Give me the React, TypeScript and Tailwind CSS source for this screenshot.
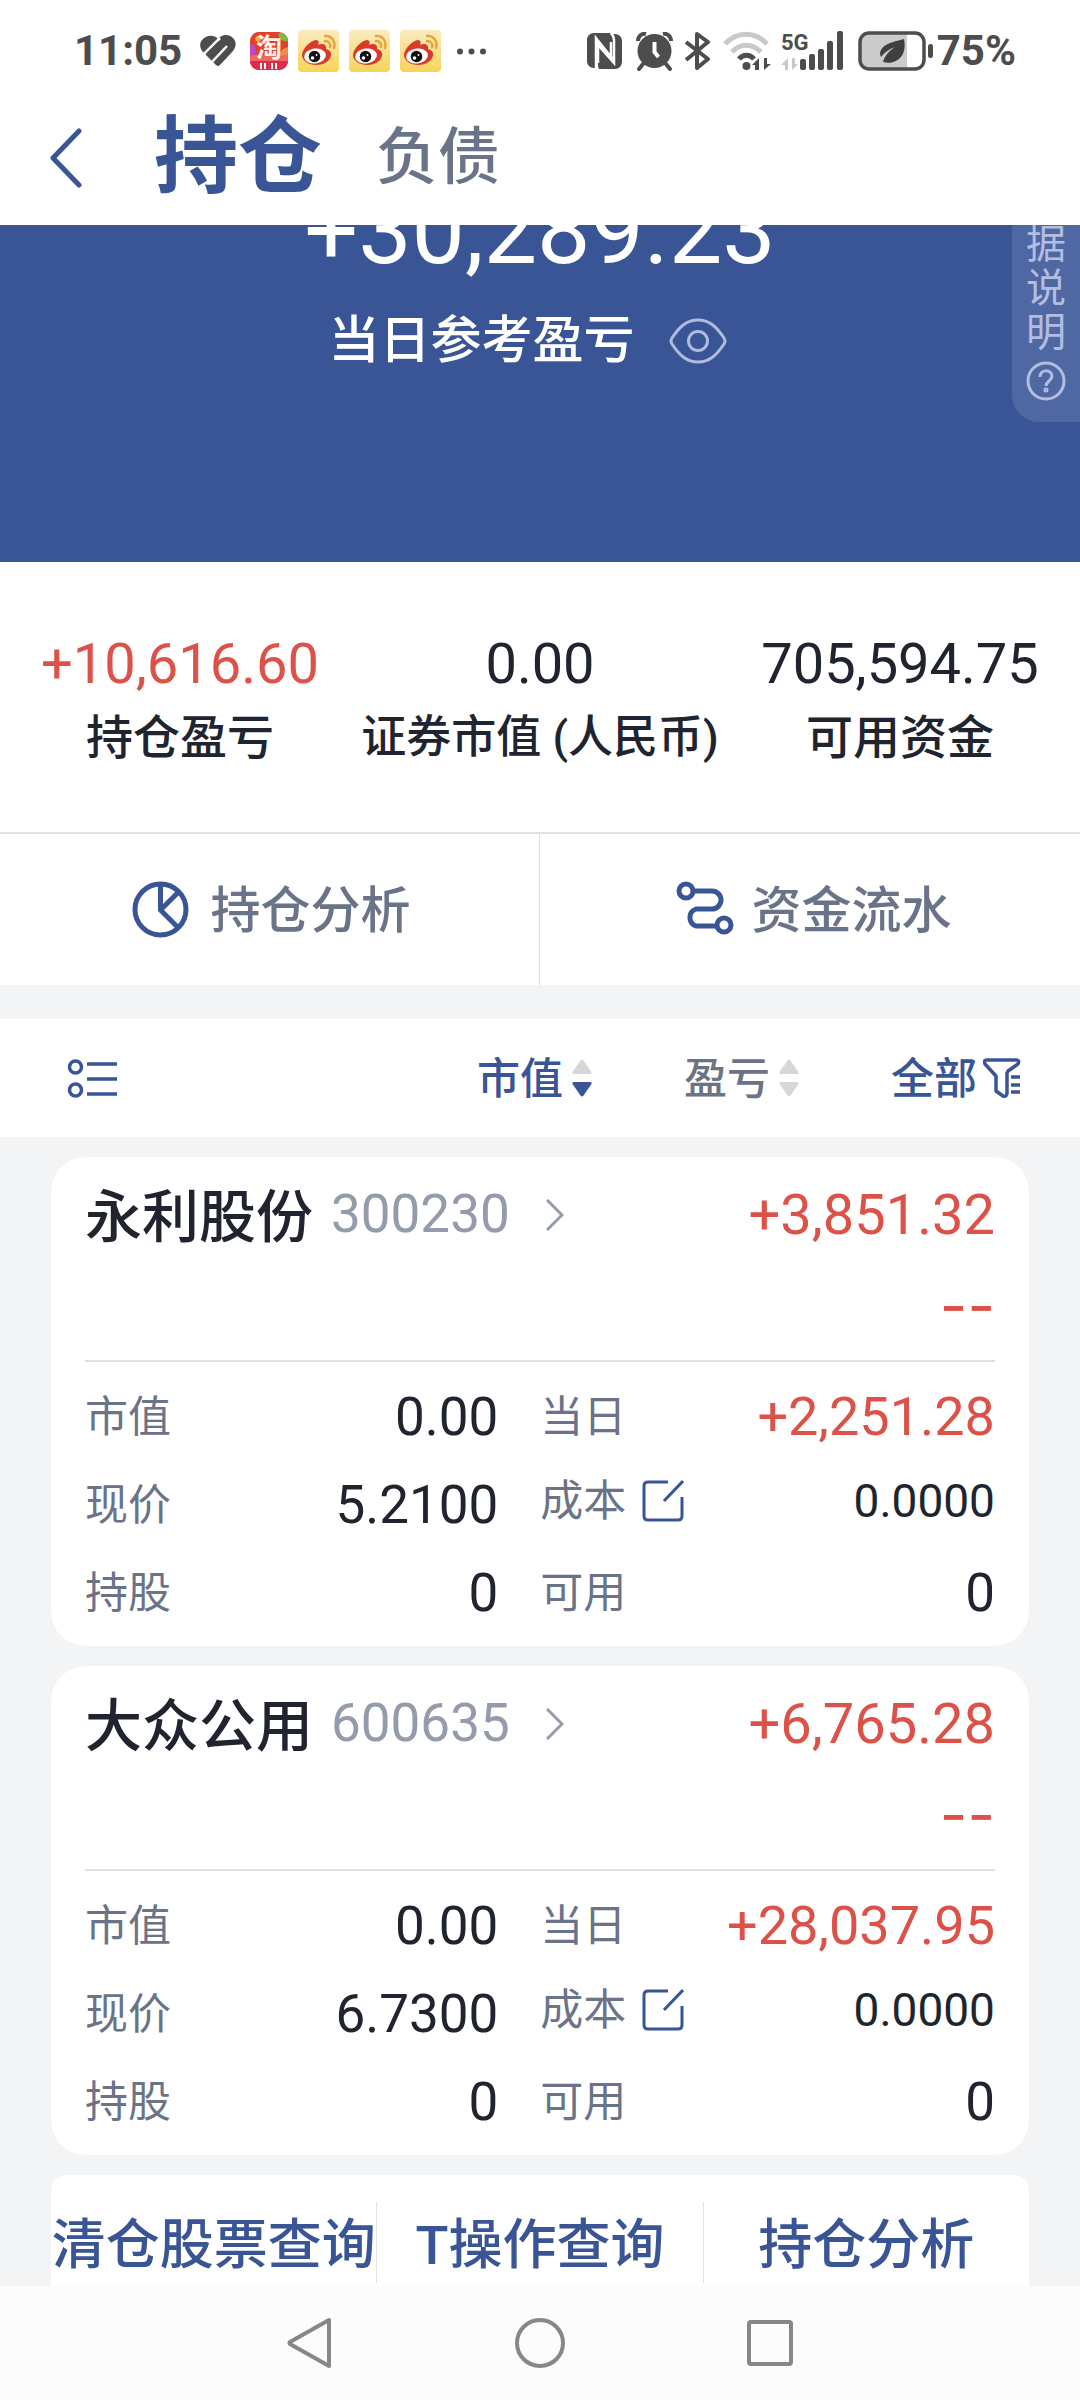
import { Fragment, ReactNode } from "react";

type Holding = {
  name: string;
  code: string;
  profit: string;
  marketValue: string;
  today: string;
  price: string;
  cost: string;
  shares: string;
  available: string;
};

const summary = [
  { label: "持仓盈亏", value: "+10,616.60", color: "text-[#dc5248]", size: "text-[47px]" },
  { label: "证券市值 (人民币)", value: "0.00", color: "text-[#20242f]", size: "text-[45px]" },
  { label: "可用资金", value: "705,594.75", color: "text-[#20242f]", size: "text-[47px]" },
];

const holdings: Holding[] = [
  {
    name: "永利股份",
    code: "300230",
    profit: "+3,851.32",
    marketValue: "0.00",
    today: "+2,251.28",
    price: "5.2100",
    cost: "0.0000",
    shares: "0",
    available: "0",
  },
  {
    name: "大众公用",
    code: "600635",
    profit: "+6,765.28",
    marketValue: "0.00",
    today: "+28,037.95",
    price: "6.7300",
    cost: "0.0000",
    shares: "0",
    available: "0",
  },
];

const queries = ["清仓股票查询", "T操作查询", "持仓分析"];

function HeartIcon() {
  return (
    <svg width="36" height="32" viewBox="0 0 36 32" fill="none">
      <path d="M18 4C14-1 6 0 2 5-1 9 0 14 3 17l13 13q2 2 4 0L33 16c3-4 4-9 0-13-4-4-11-4-15 1Z" fill="#4d4d4d" />
      <path d="M3 20 20 3M11 28l16-17" stroke="#fff" strokeWidth="2.500" />
      <path d="m3 19 9 9-5 4-7-8Z" fill="#fff" />
      <path d="M7 19 19 7" stroke="#4d4d4d" strokeWidth="2" />
    </svg>
  );
}

function TaobaoIcon() {
  return (
    <svg width="38" height="38" viewBox="0 0 38 38">
      <defs>
        <clipPath id="tb">
          <rect width="38" height="38" rx="9" />
        </clipPath>
      </defs>
      <g clipPath="url(#tb)">
        <rect width="38" height="38" fill="#e2402f" />
        <path d="M0 13c4-2 7 4 5 9l-5 3Z" fill="#b84bd0" />
        <path d="M38 15c-7 1-9 8-14 13h14Z" fill="#f08a45" />
        <path d="M0 24c10-4 22 4 38-2v8H0Z" fill="#ea6a63" />
        <rect y="29" width="38" height="9" fill="#e02b4b" />
        <circle cx="8" cy="7" r="3" fill="#f4a93c" />
        <path d="M28 2c3-2 8-1 10 2v5c-5 1-9-2-10-7Z" fill="#7fb83d" />
      </g>
      <text x="19" y="25" textAnchor="middle" fontSize="26" fontWeight="700" fill="#fff4e6" fontFamily="'Noto Sans CJK SC', sans-serif">
        淘
      </text>
      <path d="M11 31v6M15 31v6M22 31v6M26 31v6" stroke="#fff" strokeWidth="2" />
    </svg>
  );
}

function WeiboIcon({ id }: { id: string }) {
  return (
    <svg width="41" height="42" viewBox="0 0 41 42" fill="none">
      <defs>
        <linearGradient id={id} x1="0" y1="0" x2="0" y2="1">
          <stop offset="0" stopColor="#fbecc0" />
          <stop offset="1" stopColor="#f7d458" />
        </linearGradient>
      </defs>
      <rect width="41" height="42" rx="4" fill={`url(#${id})`} />
      <path
        d="M4 25C4 19 13 10 18 10c3 0 3 3 2 5 4-2 9-1 8 4 4 1 6 4 5 7-2 6-8 9-15 9S4 31 4 25Z"
        fill="#d93a2b"
      />
      <ellipse cx="17" cy="26" rx="11" ry="7.500" transform="rotate(-8 17 26)" fill="#fff" />
      <circle cx="16.500" cy="26.500" r="5.800" fill="#111" />
      <circle cx="14.500" cy="28" r="1.800" fill="#fff" />
      <circle cx="18.500" cy="25" r="0.900" fill="#fff" />
      <path d="M27 6c6-1 11 5 9 12M27 11c4 0 6 3 5 6" stroke="#e9a23b" strokeWidth="2.400" strokeLinecap="round" />
    </svg>
  );
}

function NfcIcon() {
  return (
    <svg width="35" height="36" viewBox="0 0 35 36">
      <path d="M7 0h16l3 4v20L10 7v28H7c-4 0-7-3-7-7V7c0-4 3-7 7-7Z" fill="#4d4d4d" />
      <path d="M26 1h2c4 0 7 3 7 7v20c0 5-3 8-7 8H12l-1-3V12l16 16V7Z" fill="#4d4d4d" />
      <path d="M9 36V5l15 19V9" fill="none" stroke="#fff" strokeWidth="2.500" />
      <path d="M24 0c2 2 3 4 3 7v23L11 12v18" fill="none" stroke="#fff" strokeWidth="2.500" />
    </svg>
  );
}

function AlarmIcon() {
  return (
    <svg width="37" height="39" viewBox="0 0 37 39" fill="none">
      <circle cx="18.500" cy="19" r="17" fill="#4d4d4d" />
      <path d="M2 9C2 4 6 1 10 2M35 9c0-5-4-8-8-7" stroke="#4d4d4d" strokeWidth="4" />
      <path d="m7 32-4 5M30 32l4 5" stroke="#4d4d4d" strokeWidth="4" strokeLinecap="round" />
      <path d="M18.500 10v10l4 5" stroke="#fff" strokeWidth="4" />
    </svg>
  );
}

function BluetoothIcon() {
  return (
    <svg width="26" height="40" viewBox="0 0 26 40" fill="none" stroke="#4d4d4d" strokeWidth="4" strokeLinejoin="round">
      <path d="m1 11 22 17-11 9V3l11 8L1 29" />
    </svg>
  );
}

function WifiIcon() {
  return (
    <svg width="48" height="40" viewBox="0 0 48 40" fill="none">
      <path d="M2 13C14 0 32 0 44 13" stroke="#c9c9c9" strokeWidth="5" />
      <path d="M9 21c8-9 20-9 29 0" stroke="#c9c9c9" strokeWidth="5" />
      <path d="M16 28c4-5 11-5 15 0" stroke="#4d4d4d" strokeWidth="5" />
      <circle cx="23.500" cy="35" r="4" fill="#4d4d4d" />
      <path d="M29 34l7-7v12h-4v-5ZM48 33l-7 6V27h3v6Z" fill="#4d4d4d" />
    </svg>
  );
}

function SignalIcon() {
  return (
    <svg width="63" height="40" viewBox="0 0 63 40">
      <text x="0" y="19" fontSize="22" fontWeight="700" fill="#4d4d4d" fontFamily="Roboto, sans-serif">
        5G
      </text>
      <path d="M0 34l7-7v12H4v-5ZM17 33l-6 6V27h3v6Z" fill="#c9c9c9" />
      <g fill="#4d4d4d">
        <rect x="19" y="28" width="6" height="11" rx="2" />
        <rect x="28" y="23" width="6" height="16" rx="2" />
        <rect x="37" y="18" width="6" height="21" rx="2" />
        <rect x="46" y="10" width="6" height="29" rx="2" />
        <rect x="56" y="0" width="6" height="39" rx="2" />
      </g>
    </svg>
  );
}

function BatteryIcon() {
  return (
    <svg width="76" height="40" viewBox="0 0 76 40">
      <path d="M10 3h39v34H10c-5 0-8-3-8-8V11c0-5 3-8 8-8Z" fill="#cbcbcb" />
      <rect x="2" y="2" width="64" height="36" rx="9" fill="none" stroke="#4d4d4d" strokeWidth="3.500" />
      <rect x="70" y="13" width="5" height="14" rx="2.500" fill="#4d4d4d" />
      <path d="M46 8c-9 3-23 4-24 15l1 3c4-5 8-8 14-10-6 4-10 8-12 15 10 3 25-3 21-23Z" fill="#3f3f3f" />
    </svg>
  );
}

function SortArrows({ active }: { active?: boolean }) {
  return (
    <svg width="20" height="40" viewBox="0 0 20 40">
      <path d="M8.500 2.500q1.500-2 3 0L19.500 14q.5 2-1 2h-17q-1.500 0-1-2Z" fill="#d5d7db" />
      <path
        d="M8.500 37.500q1.500 2 3 0L19.500 26q.5-2-1-2h-17q-1.500 0-1 2Z"
        fill={active ? "#395596" : "#d5d7db"}
      />
    </svg>
  );
}

function StatusBar() {
  return (
    <div className="flex justify-between items-center h-[102px] pl-[74px] pr-[64px] text-[42px] font-bold text-[#4d4d4d] leading-none">
      <div className="flex items-center">
        <span className="mr-[18px]">11:05</span>
        <HeartIcon />
        <div className="flex items-center gap-[10px] ml-[14px] mr-4">
          <TaobaoIcon />
          <WeiboIcon id="wb1" />
          <WeiboIcon id="wb2" />
          <WeiboIcon id="wb3" />
        </div>
        <svg width="29" height="7" viewBox="0 0 29 7" fill="#4d4d4d">
          <circle cx="3" cy="3.500" r="3" />
          <circle cx="14.500" cy="3.500" r="3" />
          <circle cx="26" cy="3.500" r="3" />
        </svg>
      </div>
      <div className="flex items-center">
        <NfcIcon />
        <div className="flex items-center gap-3 ml-[14px]">
          <AlarmIcon />
          <BluetoothIcon />
          <WifiIcon />
        </div>
        <div className="flex items-center gap-[14px] ml-[10px] mr-[3px]">
          <SignalIcon />
          <BatteryIcon />
        </div>
        <span>75%</span>
      </div>
    </div>
  );
}

function Header() {
  return (
    <header className="flex items-center h-[123px] pb-3 pl-[50px]">
      <button aria-label="返回">
        <svg width="32" height="60" viewBox="0 0 32 60" fill="none" stroke="#395596" strokeWidth="5" strokeLinecap="round" strokeLinejoin="round">
          <path d="M29 3 3 30l26 27" />
        </svg>
      </button>
      <nav className="flex items-center gap-[54px] ml-[72px] leading-none">
        <a href="#" className="text-[84px] font-bold text-[#395596]">持仓</a>
        <a href="#" className="text-[62px] text-[#6b7388] font-medium">负债</a>
      </nav>
    </header>
  );
}

function Banner() {
  return (
    <section className="relative h-[337px] overflow-hidden bg-[#395596] text-white">
      <p className="-mt-[42px] text-[95px] leading-none text-center">+30,289.23</p>
      <div className="flex justify-center items-center gap-[34px] mt-[33px] pr-[25px]">
        <span className="text-[51px] leading-[60px] font-medium">当日参考盈亏</span>
        <button aria-label="隐藏金额">
          <svg width="58" height="46" viewBox="0 0 58 46" fill="none" stroke="#b0bcdf" strokeWidth="3">
            <path d="M3 20C11 8 18 2 29 2s18 6 26 18q2 3 0 6C47 38 40 44 29 44S11 38 3 26q-2-3 0-6Z" />
            <circle cx="29" cy="23" r="9.500" />
          </svg>
        </button>
      </div>
      <button className="absolute right-0 bottom-[140px] w-[68px] flex flex-col items-center pb-[21px] rounded-bl-[27px] bg-[#4f68a3] text-[#b3bde0] text-[40px] leading-[44px]">
        <span>数</span>
        <span>据</span>
        <span>说</span>
        <span>明</span>
        <svg className="mt-[6px]" width="40" height="40" viewBox="0 0 40 40" fill="none" stroke="#b3bde0" strokeWidth="3">
          <circle cx="20" cy="20" r="18" />
          <path d="M14 16c0-8 12-8 12-1 0 5-6 5-6 10" />
          <circle cx="20" cy="29" r="1" />
        </svg>
      </button>
    </section>
  );
}

function Summary() {
  return (
    <section className="grid grid-cols-3 h-[270px] pt-[70px] bg-white text-center">
      {summary.map((item) => (
        <div key={item.label}>
          <p className={`text-[56px] leading-[64px] ${item.color}`}>{item.value}</p>
          <p className={`${item.size} mt-[10px] leading-[64px] font-medium whitespace-nowrap text-[#20242f]`}>{item.label}</p>
        </div>
      ))}
    </section>
  );
}

function Shortcuts() {
  return (
    <section className="grid grid-cols-2 h-[153px] border-t-2 border-[#dfe0e2] bg-white text-[50px] text-[#6b7388] font-medium">
      <button className="flex justify-center items-center gap-[22px] pl-[3px] border-r border-[#dfe0e2]">
        <svg width="57" height="57" viewBox="0 0 57 57" fill="none" stroke="#395596" strokeWidth="5">
          <circle cx="28.500" cy="28.500" r="25.500" />
          <path d="M28.500 3v26l17 17M28.500 29l18-18" />
        </svg>
        <span className="pt-1">持仓分析</span>
      </button>
      <button className="flex justify-center items-center gap-[18px] pl-[7px]">
        <svg width="58" height="58" viewBox="0 0 58 58" fill="none" stroke="#395596" strokeWidth="5">
          <circle cx="10" cy="10" r="7" />
          <circle cx="48" cy="44" r="7" />
          <path d="M17 10h19a9 9 0 0 1 0 18H20a9 9 0 0 0 0 17h21" />
        </svg>
        <span className="pt-1">资金流水</span>
      </button>
    </section>
  );
}

function Toolbar() {
  return (
    <section className="flex justify-between items-center h-[118px] mt-[34px] pl-[67px] pr-[59px] bg-white text-[43px] font-medium">
      <button aria-label="列表显示">
        <svg width="50" height="42" viewBox="0 0 50 42" fill="none" stroke="#395596" strokeWidth="3.500">
          <circle cx="8.500" cy="10" r="6" />
          <circle cx="8.500" cy="33" r="6" />
          <path d="M20 7h30M20 22h30M20 37h30" />
        </svg>
      </button>
      <div className="flex items-center gap-[92px]">
        <button className="flex items-center gap-[9px] text-[#395596]">
          <span className="pt-[3px]">市值</span>
          <SortArrows active />
        </button>
        <button className="flex items-center gap-[9px] text-[#6d7382]">
          <span className="pt-[3px]">盈亏</span>
          <SortArrows />
        </button>
        <button className="flex items-center gap-[6px] text-[#395596]">
          <span className="pt-[3px]">全部</span>
          <svg width="38" height="40" viewBox="0 0 38 40" fill="none" stroke="#395596" strokeWidth="3.500" strokeLinejoin="round">
            <path d="M25 13 35 6q2-4-2-4H4Q0 2 2 6l11 12v15l7 5q4 1 4-3V15Z" />
            <path d="M28 19h9M28 27h9M28 34h9" />
          </svg>
        </button>
      </div>
    </section>
  );
}

function Row({ label, value, className, children }: { label: string; value: string; className: string; children?: ReactNode }) {
  return (
    <div className={`flex justify-between items-center h-[88px] ${children ? "pb-2" : ""}`}>
      <div className="flex items-center gap-4 text-[43px] text-[#6b7388]">
        {label}
        {children}
      </div>
      <span className={className}>{value}</span>
    </div>
  );
}

function HoldingCard({ item }: { item: Holding }) {
  const normal = "text-[53px] text-[#20242f]";
  return (
    <article className="px-[34px] pb-[9px] rounded-[35px] bg-white">
      <div className="flex justify-between items-center h-[116px]">
        <a href="#" className="flex items-center">
          <span className="pt-[6px] text-[57px] font-medium text-[#20242f]">{item.name}</span>
          <span className="ml-[18px] text-[53px] text-[#949baa]">{item.code}</span>
          <svg className="ml-9" width="18" height="32" viewBox="0 0 18 32" fill="none" stroke="#949baa" strokeWidth="3">
            <path d="m1 1 15 15L1 31" />
          </svg>
        </a>
        <span className="text-[56px] text-[#dc5248]">{item.profit}</span>
      </div>
      <div className="h-[87px] text-right text-[60px] leading-[64px] text-[#dc5248] font-[Inter,sans-serif]">--</div>
      <div className="grid grid-cols-[10fr_11fr] gap-x-[42px] pt-[11px] border-t-2 border-[#dfe1e4] leading-none">
        <Row label="市值" value={item.marketValue} className={normal} />
        <Row label="当日" value={item.today} className="text-[54px] text-[#dc5248]" />
        <Row label="现价" value={item.price} className={normal} />
        <Row label="成本" value={item.cost} className="text-[46px] text-[#20242f]">
          <button aria-label="修改成本">
            <svg width="42" height="42" viewBox="0 0 42 42" fill="none" stroke="#395596" strokeWidth="3">
              <path d="M26 2H6Q2 2 2 6v30q0 4 4 4h30q4 0 4-4V17M22 21 41 1" />
            </svg>
          </button>
        </Row>
        <Row label="持股" value={item.shares} className={normal} />
        <Row label="可用" value={item.available} className={normal} />
      </div>
    </article>
  );
}

function QueryBar() {
  return (
    <div className="flex items-start h-[140px] pt-[27px] rounded-t-[15px] bg-white">
      {queries.map((name, i) => (
        <Fragment key={name}>
          {i > 0 && <div className="w-[1px] h-[81px] bg-[#dfe1e4]" />}
          <button className="flex-1 h-[81px] pt-[6px] text-[54px] leading-none font-medium whitespace-nowrap text-[#395596]">
            {name}
          </button>
        </Fragment>
      ))}
    </div>
  );
}

function SystemNav() {
  return (
    <footer className="fixed inset-x-0 bottom-0 flex justify-center items-center h-[114px] bg-[#fcfcfc]">
      <div className="flex items-center gap-[182px]">
        <button aria-label="后退">
          <svg width="46" height="52" viewBox="0 0 46 52" fill="none" stroke="#878787" strokeWidth="4" strokeLinejoin="round">
            <path d="M42 3v46L3 27q-1-1 0-2Z" />
          </svg>
        </button>
        <button aria-label="主屏幕">
          <svg width="50" height="50" viewBox="0 0 50 50" fill="none" stroke="#878787" strokeWidth="4">
            <circle cx="25" cy="25" r="23" />
          </svg>
        </button>
        <button aria-label="最近任务">
          <svg width="46" height="46" viewBox="0 0 46 46" fill="none" stroke="#878787" strokeWidth="4">
            <rect x="2" y="2" width="42" height="42" rx="2" />
          </svg>
        </button>
      </div>
    </footer>
  );
}

function App() {
  return (
    <div className="flex flex-col h-screen overflow-hidden bg-[#f3f4f6] font-[Roboto,'Noto_Sans_CJK_SC',sans-serif]">
      <div className="shrink-0 bg-white">
        <StatusBar />
        <Header />
      </div>
      <main className="flex-1 overflow-hidden">
        <Banner />
        <Summary />
        <Shortcuts />
        <Toolbar />
        <section className="flex flex-col gap-5 px-[51px] pt-5">
          {holdings.map((item) => (
            <HoldingCard key={item.code} item={item} />
          ))}
          <QueryBar />
        </section>
      </main>
      <SystemNav />
    </div>
  );
}

export default App;
